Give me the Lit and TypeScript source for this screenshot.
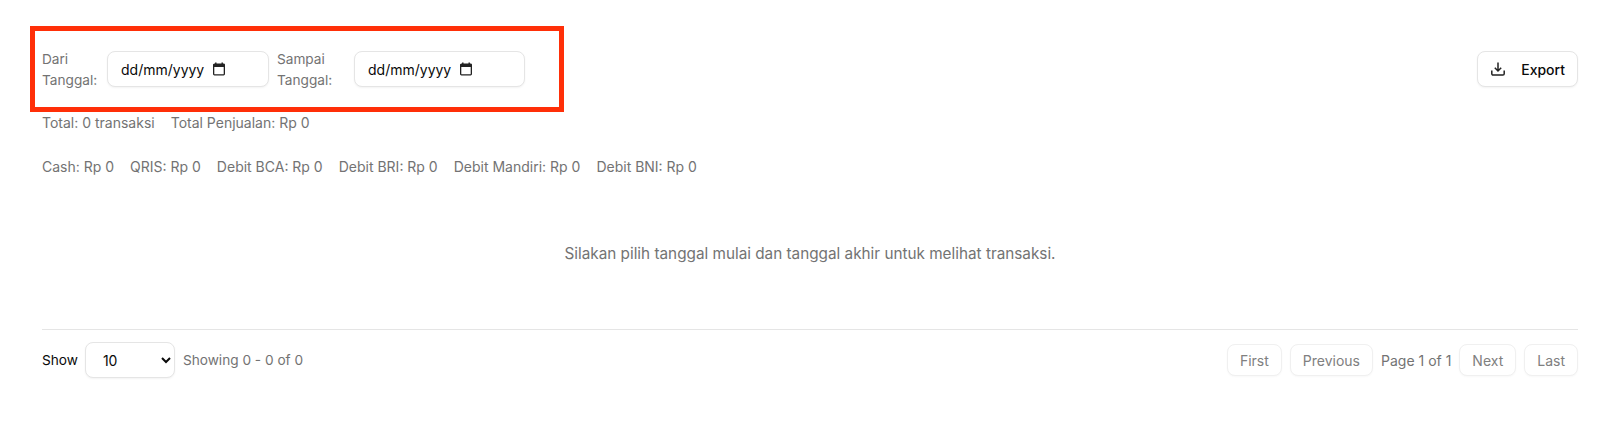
import { LitElement, html, css } from "lit";
import { customElement } from "lit/decorators.js";

const calendar = html`<svg class="cal" width="14" height="14" viewBox="0 0 14 14" fill="none"><path d="M3.8 0.5v2M10.2 0.5v2" stroke="#222" stroke-width="1.4"/><rect x="1.65" y="2.15" width="10.7" height="10.7" rx="0.8" stroke="#222" stroke-width="1.3"/><rect x="1.5" y="2" width="11" height="3" fill="#222"/></svg>`;

@customElement("app-root")
export class AppRoot extends LitElement {
  static styles = css`
    :host { display: block; position: relative; height: 441px; background: #fff; font-family: Inter, "Noto Sans", sans-serif; font-size: 14px; color: #737373; overflow: hidden; }
    .page { padding: 51px 36px 0 42px; display: flex; flex-direction: column; }
    .top { display: flex; justify-content: space-between; align-items: flex-start; }
    .filters { display: flex; align-items: center; gap: 8px; height: 36px; }
    .field { display: flex; align-items: center; gap: 8px; }
    .lbl { line-height: 20.6px; color: #737373; font-size: 13.65px; padding-top: 2px; }
    .lbl1 { width: 57px; }
    .lbl2 { width: 69px; }
    .date { box-sizing: border-box; height: 36px; border: 1px solid #e5e5e5; border-radius: 8px; background: #fff; box-shadow: 0 1px 2px rgba(0,0,0,.05); display: flex; align-items: center; padding: 0 13px; color: #0a0a0a; }
    .d1 { width: 162px; }
    .d2 { width: 171px; }
    .cal { margin-left: 8px; }
    .export { box-sizing: border-box; width: 101px; height: 36px; border: 1px solid #e5e5e5; border-radius: 8px; background: #fff; box-shadow: 0 1px 2px rgba(0,0,0,.05); display: flex; align-items: center; justify-content: space-between; padding: 0 12px 0 13px; color: #0a0a0a; font: 500 14px Inter, sans-serif; }
    .stats { display: flex; gap: 16px; line-height: 20px; }
    .s1 { margin-top: 26px; }
    .s2 { margin-top: 24px; }
    .empty { text-align: center; line-height: 20px; margin-top: 67px; font-size: 15.3px; }
    .foot { border-top: 1px solid #e5e5e5; margin-top: 65px; padding-top: 12px; display: flex; justify-content: space-between; align-items: center; }
    .left, .right { display: flex; align-items: center; gap: 8px; }
    .left { font-size: 13.65px; }
    .show { color: #0a0a0a; margin-right: -1px; }
    select { box-sizing: border-box; width: 90px; height: 36px; border: 1px solid #e5e5e5; border-radius: 8px; background: #fff; box-shadow: 0 1px 2px rgba(0,0,0,.05); padding: 0 13px; color: #0a0a0a; font: 14px Inter, sans-serif; }
    .pg { box-sizing: border-box; height: 32px; border: 1px solid #f0f0f0; border-radius: 8px; background: #fff; box-shadow: 0 1px 2px rgba(0,0,0,.03); padding: 0 12px; color: #808080; font: 400 14px Inter, sans-serif; }
    .marker { position: absolute; left: 30px; top: 26px; width: 534px; height: 86px; box-sizing: border-box; border: 5px solid #ff2f08; pointer-events: none; }
  `;

  render() {
    return html`
      <div class="page">
        <div class="top">
          <div class="filters">
            <div class="field"><div class="lbl lbl1">Dari Tanggal:</div><div class="date d1"><span>dd/mm/yyyy</span>${calendar}</div></div>
            <div class="field"><div class="lbl lbl2">Sampai Tanggal:</div><div class="date d2"><span>dd/mm/yyyy</span>${calendar}</div></div>
          </div>
          <button class="export">
            <svg width="14" height="14" viewBox="0 0 14 14" fill="none" stroke="#222" stroke-width="1.5"><path d="M7 0.5v8.5M3.8 5.8L7 9l3.2-3.2"/><path d="M0.8 8.5v3.2a1.3 1.3 0 0 0 1.3 1.3h9.8a1.3 1.3 0 0 0 1.3-1.3V8.5"/></svg>
            <span>Export</span>
          </button>
        </div>
        <div class="stats s1"><span>Total: 0 transaksi</span><span>Total Penjualan: Rp 0</span></div>
        <div class="stats s2"><span>Cash: Rp 0</span><span>QRIS: Rp 0</span><span>Debit BCA: Rp 0</span><span>Debit BRI: Rp 0</span><span>Debit Mandiri: Rp 0</span><span>Debit BNI: Rp 0</span></div>
        <div class="empty">Silakan pilih tanggal mulai dan tanggal akhir untuk melihat transaksi.</div>
        <div class="foot">
          <div class="left"><span class="show">Show</span><select><option>10</option></select><span>Showing 0 - 0 of 0</span></div>
          <div class="right"><button class="pg">First</button><button class="pg">Previous</button><span>Page 1 of 1</span><button class="pg">Next</button><button class="pg">Last</button></div>
        </div>
      </div>
      <div class="marker"></div>
    `;
  }
}
